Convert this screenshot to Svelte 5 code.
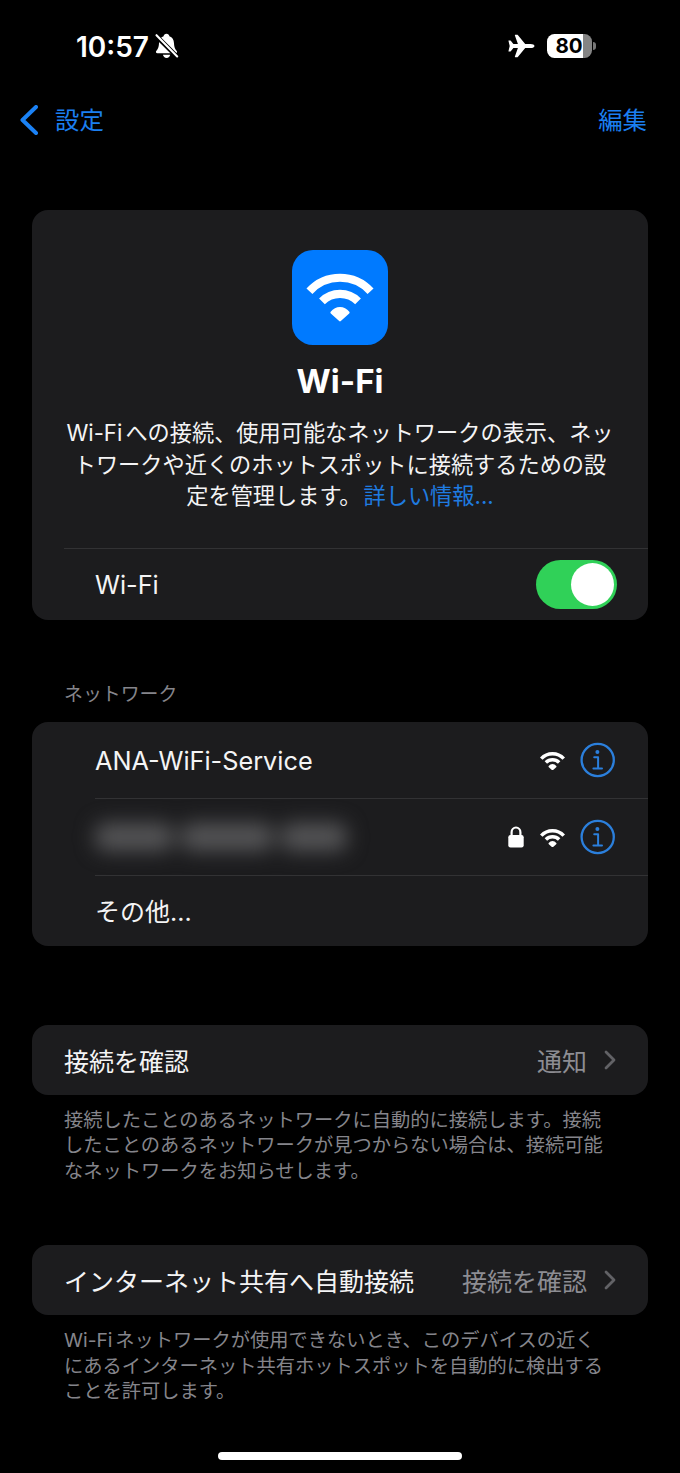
<script lang="ts">
    let wifiOn = true;

    const networks = [
        { name: "ANA-WiFi-Service", locked: false },
        { name: "", locked: true },
    ];

    const options = [
        {
            title: "接続を確認",
            value: "通知",
            latin: "",
            note: [
                "接続したことのあるネットワークに自動的に接続します。接続",
                "したことのあるネットワークが見つからない場合は、接続可能",
                "なネットワークをお知らせします。",
            ],
        },
        {
            title: "インターネット共有へ自動接続",
            value: "接続を確認",
            latin: "Wi-Fi",
            note: [
                "ネットワークが使用できないとき、このデバイスの近く",
                "にあるインターネット共有ホットスポットを自動的に検出する",
                "ことを許可します。",
            ],
        },
    ];
</script>

{#snippet wifi()}
    <svg class="wifi" viewBox="13 22.5 69 49" fill="none" stroke="#fff">
        <path class="arc" d="M16.5 40.6A42 42 0 0 1 78.5 40.6" />
        <path class="arc" d="M29.2 51A25.7 25.7 0 0 1 65.8 51" />
        <path class="dot" d="M39 62.3Q42.5 58 47.5 58Q52.5 58 56 62.3L47.5 70Z" fill="#fff" stroke-linejoin="round" />
    </svg>
{/snippet}

<div class="screen">
    <header class="status">
        <span class="time">10:57</span>
        <svg class="bell" width="24" height="26" viewBox="0 0 24 26">
            <path d="M11.500 .8c1.600 0 2.700 1 2.900 2.400 3 1 4.400 3.600 4.600 7 .2 4.300 1.200 5.700 2.600 7.600.8 1 .5 2.400-1 2.400H2.400c-1.500 0-1.900-1.400-1-2.400 1.400-1.900 2.400-3.300 2.600-7.600.2-3.400 1.600-6 4.600-7C8.800 1.800 9.900.8 11.500.8z" fill="#fff" />
            <path d="M8 21.700h7.200c-.3 2-1.700 3.200-3.600 3.200S8.300 23.700 8 21.700z" fill="#fff" />
            <path d="M.5 2.200L22.500 24.200" stroke="#000" stroke-width="4.600" />
            <path d="M1.500 2.200L22.200 23.400" stroke="#fff" stroke-width="2.100" stroke-linecap="round" />
        </svg>
        <svg class="plane" width="27" height="24" viewBox="0 0 27 24">
            <path d="M26.5 12c0 1.200-1.700 2.100-4 2.100h-5.300L10 22.700c-.3.400-.6.500-1 .5H7.300c-.4 0-.6-.3-.4-.8l3-8.300H5.400L2.800 17.200c-.3.300-.5.400-.9.400H1c-.4 0-.6-.2-.5-.6L1.700 12 .5 7c-.1-.4.1-.6.5-.6h.9c.4 0 .6.1.9.4l2.600 3.100h4.500l-3-8.300c-.2-.5 0-.8.4-.8H9c.4 0 .7.1 1 .5l7.200 8.600h5.300c2.300 0 4 .9 4 2.100z" fill="#fff" />
        </svg>
        <div class="battery"><span>80</span></div>
        <i class="nub"></i>
    </header>

    <nav>
        <button class="back">
            <svg width="18" height="30" viewBox="0 0 18 30"><path d="M16 2L2.500 15L16 28" fill="none" stroke="#1b82f5" stroke-width="4" stroke-linecap="round" stroke-linejoin="round" /></svg>
            <span>設定</span>
        </button>
        <button><span>編集</span></button>
    </nav>

    <section class="card hero">
        <div class="app-icon">{@render wifi()}</div>
        <h1>Wi-Fi</h1>
        <p>
            <span class="latin">Wi-Fi</span>への接続、使用可能なネットワークの表示、ネッ<br />
            トワークや近くのホットスポットに接続するための設<br />
            定を管理します。<a href="#more">詳しい情報...</a>
        </p>
        <div class="switch-row">
            <span>Wi-Fi</span>
            <button class="toggle" class:on={wifiOn} aria-label="Wi-Fi" on:click={() => (wifiOn = !wifiOn)}><i></i></button>
        </div>
    </section>

    <h2>ネットワーク</h2>
    <section class="card networks">
        {#each networks as network}
            <div class="network">
                {#if network.name}
                    <span class="name">{network.name}</span>
                {:else}
                    <span class="hidden-name"><i></i><i></i><i></i></span>
                {/if}
                {#if network.locked}
                    <svg class="lock" width="16" height="22" viewBox="0 0 16 22">
                        <path d="M3.6 10V6.2a4.400 4.700 0 0 1 8.800 0V10" fill="none" stroke="#fff" stroke-width="2.200" />
                        <rect x=".3" y="9" width="15.400" height="12.500" rx="2.200" fill="#fff" />
                    </svg>
                {/if}
                {@render wifi()}
                <svg class="info" width="36" height="36" viewBox="0 0 36 36" fill="none" stroke="#2b7fdc">
                    <circle cx="17.700" cy="18" r="16.100" stroke-width="2.300" />
                    <path d="M14.200 15.300h3.900v11M13.400 26.500h8.600" stroke-width="2" stroke-linecap="round" stroke-linejoin="round" />
                    <circle cx="17.400" cy="9.900" r="2" fill="#2b7fdc" stroke="none" />
                </svg>
            </div>
        {/each}
        <div class="network other">その他...</div>
    </section>

    {#each options as option}
        <section class="card option">
            <span>{option.title}</span>
            <span class="value">{option.value}</span>
            <svg width="12" height="20" viewBox="0 0 12 20"><path d="M2 2L10 10L2 18" fill="none" stroke="#626266" stroke-width="2.800" stroke-linecap="round" stroke-linejoin="round" /></svg>
        </section>
        <p class="note">
            {#each option.note as line, i}
                <span>{#if i === 0 && option.latin}<span class="latin">{option.latin}</span>{/if}{line}</span>
            {/each}
        </p>
    {/each}

    <div class="home"></div>
</div>

<style>
    :global(body) {
        background: #000;
    }
    .screen {
        width: 680px;
        height: 1473px;
        box-sizing: border-box;
        padding: 0 32px;
        overflow: hidden;
        display: flex;
        flex-direction: column;
        background: #000;
        color: #f4f4f5;
        font-family: Inter, "Noto Sans CJK JP", sans-serif;
        font-size: 25px;
    }
    .screen svg {
        display: block;
        flex: none;
    }
    button {
        border: 0;
        padding: 0;
        background: none;
        color: #1b7ff0;
        font: inherit;
    }
    .status {
        height: 92px;
        margin: 0 52px 0 44px;
        display: flex;
        align-items: center;
    }
    .time {
        width: 79px;
        padding-top: 1px;
        font-size: 28px;
        font-weight: 600;
        color: #fff;
        white-space: nowrap;
    }
    .plane {
        margin-left: auto;
    }
    .battery {
        width: 45px;
        height: 24px;
        margin-left: 12px;
        padding-right: 1px;
        box-sizing: border-box;
        border-radius: 7.5px;
        background: linear-gradient(90deg, #fff 36px, #848484 36px);
        color: #000;
        font-size: 20.5px;
        font-weight: 700;
        line-height: 24px;
        text-align: center;
    }
    .nub {
        width: 3px;
        height: 8px;
        margin-left: 1px;
        border-radius: 0 4px 4px 0;
        background: #777;
    }
    nav {
        height: 56px;
        margin: 0 1px 0 -12px;
        display: flex;
        align-items: center;
        justify-content: space-between;
        font-size: 24.4px;
    }
    nav span {
        padding-bottom: 3px;
        display: block;
    }
    .back {
        display: flex;
        align-items: center;
        gap: 17px;
    }
    .card {
        background: #1c1c1e;
        border-radius: 16px;
        flex: none;
    }
    .hero {
        height: 410px;
        margin-top: 62px;
        box-sizing: border-box;
        padding-top: 40px;
        display: flex;
        flex-direction: column;
        align-items: center;
    }
    .app-icon {
        width: 96px;
        height: 95px;
        display: grid;
        place-items: center;
        border-radius: 21px;
        background: #007aff;
    }
    .wifi .arc {
        stroke-width: 8.2px;
    }
    .wifi .dot {
        stroke-width: 2.5px;
    }
    .app-icon .wifi {
        width: 68px;
        height: 49px;
    }
    h1 {
        margin: 16px 0 0;
        font-size: 33px;
        line-height: 40px;
        font-weight: 700;
        color: #fff;
    }
    .hero p {
        margin: 16px 0 0;
        font-size: 22.2px;
        line-height: 31.5px;
        text-align: center;
        white-space: nowrap;
    }
    .latin {
        margin-right: 0.14em;
    }
    a {
        color: #1f7be0;
        margin-left: 2px;
        text-decoration: none;
    }
    .switch-row {
        width: 584px;
        height: 72px;
        margin: auto 0 0 32px;
        padding: 0 31px;
        box-sizing: border-box;
        border-top: 1px solid #323234;
        display: flex;
        align-items: center;
        justify-content: space-between;
        font-size: 25.3px;
    }
    .toggle {
        width: 81px;
        height: 49px;
        padding: 3px;
        border-radius: 25px;
        background: #39393d;
        display: flex;
    }
    .toggle.on {
        background: #30d158;
        justify-content: flex-end;
    }
    .toggle i {
        width: 43px;
        height: 43px;
        border-radius: 50%;
        background: #fff;
    }
    h2 {
        margin: 60px 0 0 32px;
        height: 42px;
        line-height: 30px;
        font-size: 18.9px;
        font-weight: 400;
        color: #85858b;
    }
    .networks {
        height: 224px;
    }
    .network {
        height: 77px;
        margin-left: 63px;
        padding-right: 32px;
        box-sizing: border-box;
        border-bottom: 1px solid #323234;
        display: flex;
        align-items: center;
    }
    .network > :first-child {
        margin-right: auto;
    }
    .name {
        padding-top: 1px;
        font-size: 25.3px;
    }
    .network .wifi {
        width: 25px;
        height: 18px;
        margin: 0 15px 0 16px;
        padding-top: 1px;
    }
    .network .arc {
        stroke-width: 9.5px;
    }
    .network .dot {
        stroke-width: 5px;
    }
    .other {
        height: 68px;
        border: 0;
    }
    .hidden-name {
        display: flex;
        align-items: center;
        gap: 8px;
        filter: blur(10px);
    }
    .hidden-name i {
        width: 78px;
        height: 28px;
        border-radius: 10px;
        background: #555557;
    }
    .hidden-name i:nth-child(2) {
        width: 92px;
    }
    .hidden-name i:nth-child(3) {
        width: 66px;
    }
    .option {
        height: 70px;
        margin-top: 79px;
        padding: 0 32px;
        display: flex;
        align-items: center;
    }
    .note + .option {
        margin-top: 61px;
    }
    .value {
        margin: 0 17px 0 auto;
        color: #8d8d93;
    }
    .note {
        margin: 13px 0 0 32px;
        display: flex;
        flex-direction: column;
        font-size: 19.25px;
        line-height: 25.4px;
        color: #85858b;
        white-space: nowrap;
    }
    .home {
        width: 244px;
        height: 8px;
        margin: auto auto 13px;
        border-radius: 4px;
        background: #fff;
        flex: none;
    }
</style>
